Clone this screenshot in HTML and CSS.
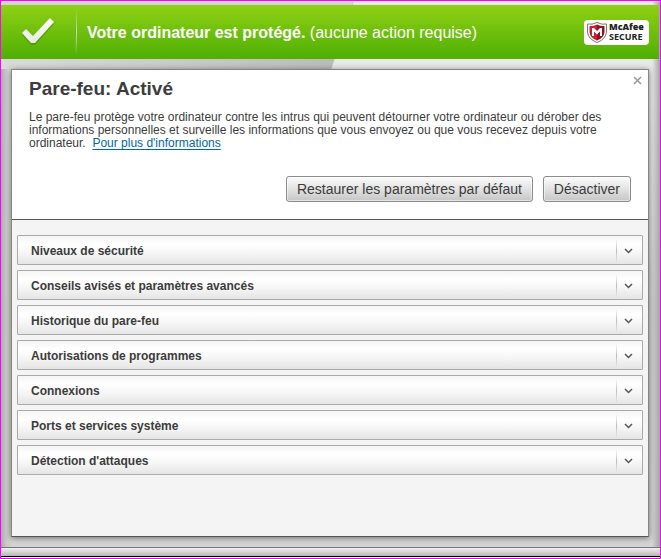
FILE: index.html
```html
<!DOCTYPE html>
<html lang="fr">
<head>
<meta charset="utf-8">
<title>Pare-feu</title>
<link rel="stylesheet" href="styles.css">
</head>
<body>
<div class="window">
  <svg class="facets" aria-hidden="true">
    <defs>
      <linearGradient id="shade" x1="0" y1="0" x2="1" y2="0">
        <stop offset="0" stop-color="#dadada"/><stop offset="1" stop-color="#b9b9b9"/>
      </linearGradient>
    </defs>
    <path d="M0 0H353L330 69H0Z" fill="url(#shade)"/>
    <path d="M0 0H353L351 4H0Z" fill="#d3d3d3"/>
  </svg>
  <header class="status">
    <svg class="check" viewBox="0 0 34 28" aria-hidden="true">
      <defs>
        <linearGradient id="tick" x1="0" y1="0" x2="0" y2="1">
          <stop offset="0" stop-color="#fff"/><stop offset="1" stop-color="#e6ebe2"/>
        </linearGradient>
      </defs>
      <path d="M1 15L5 11L12 18L29 0L33 4L14 25H10Z" fill="#397d08" opacity=".45" transform="translate(0 2)"/>
      <path d="M1 15L5 11L12 18L29 0L33 4L14 25H10Z" fill="url(#tick)"/>
    </svg>
    <span class="rule"></span>
    <p class="message"><strong>Votre ordinateur est protégé.</strong> (aucune action requise)</p>
    <div class="badge">
      <svg class="shield" viewBox="0 0 20 21" aria-hidden="true">
        <path d="M.5 2Q5 3 10 .5Q15 3 19.500 2V10Q19 17 10 20.500Q1 17 .5 10Z" fill="#fff" stroke="#777" stroke-width="1"/>
        <path d="M2.500 4Q6 4.500 10 2.500V18.500Q3 16 2.500 10Z" fill="#d01c30"/>
        <path d="M17.500 4Q14 4.500 10 2.500V18.500Q17 16 17.500 10Z" fill="#96101f"/>
        <path d="M5 6H7L10 9L13 6H15V14H13V9.500L10 12.500L7 9.500V14H5Z" fill="#fff"/>
      </svg>
      <div class="brand"><b>McAfee</b><span>SECURE</span></div>
    </div>
  </header>
  <main class="panel">
    <section class="summary">
      <button class="close" type="button" aria-label="Fermer">
        <svg viewBox="0 0 9 9" aria-hidden="true"><path d="M1 1L8 8M8 1L1 8" stroke="#999" stroke-width="1.500"/></svg>
      </button>
      <h1>Pare-feu: Activé</h1>
      <p class="text">Le pare-feu protège votre ordinateur contre les intrus qui peuvent détourner votre ordinateur ou dérober des<br>informations personnelles et surveille les informations que vous envoyez ou que vous recevez depuis votre<br>ordinateur.&nbsp; <a href="#infos">Pour plus d'informations</a></p>
      <div class="actions">
        <button type="button">Restaurer les paramètres par défaut</button>
        <button type="button">Désactiver</button>
      </div>
    </section>
    <section class="drawers">
      <button class="drawer" type="button"><span>Niveaux de sécurité</span><i><svg viewBox="0 0 9 6"><path d="M1 1L4.500 4.500L8 1"/></svg></i></button>
      <button class="drawer" type="button"><span>Conseils avisés et paramètres avancés</span><i><svg viewBox="0 0 9 6"><path d="M1 1L4.500 4.500L8 1"/></svg></i></button>
      <button class="drawer" type="button"><span>Historique du pare-feu</span><i><svg viewBox="0 0 9 6"><path d="M1 1L4.500 4.500L8 1"/></svg></i></button>
      <button class="drawer" type="button"><span>Autorisations de programmes</span><i><svg viewBox="0 0 9 6"><path d="M1 1L4.500 4.500L8 1"/></svg></i></button>
      <button class="drawer" type="button"><span>Connexions</span><i><svg viewBox="0 0 9 6"><path d="M1 1L4.500 4.500L8 1"/></svg></i></button>
      <button class="drawer" type="button"><span>Ports et services système</span><i><svg viewBox="0 0 9 6"><path d="M1 1L4.500 4.500L8 1"/></svg></i></button>
      <button class="drawer" type="button"><span>Détection d'attaques</span><i><svg viewBox="0 0 9 6"><path d="M1 1L4.500 4.500L8 1"/></svg></i></button>
    </section>
  </main>
  <footer class="bottom"></footer>
</div>
</body>
</html>
```
FILE: styles.css
```css
* { box-sizing: border-box; }
body {
  margin: 0;
  font-family: "Liberation Sans", Arial, sans-serif;
  font-size: 12px;
  color: #3c3c3c;
}
.window {
  position: relative;
  display: flex;
  flex-direction: column;
  min-height: 100vh;
  border: 1px solid #f0f;
  background: linear-gradient(90deg, #aaa, #c8c8c8 5px, transparent 12px, transparent calc(100% - 8px), #a4a4a4), linear-gradient(#e8e8e8 90px, #cfcfcf 300px, #d4d4d4);
}
.facets {
  position: absolute;
  top: 0;
  left: 0;
  width: 100%;
  height: 68px;
}
.status {
  position: relative;
  display: flex;
  align-items: center;
  height: 54px;
  margin: 4px 1px 0 0;
  padding: 0 10px 0 20px;
  background: linear-gradient(#8fd014, #4faf04);
  color: #fff;
}
.check { width: 34px; height: 28px; }
.rule {
  width: 2px;
  height: 46px;
  margin: 0 10px 0 20px;
  background: linear-gradient(transparent, #397d0899 50%, transparent) 0 0 / 1px 100% no-repeat, linear-gradient(transparent, #ffffff99 50%, transparent);
}
.message { flex: 1; margin: 0; padding-top: 2px; font-size: 16px; }
.badge {
  display: flex;
  align-items: center;
  gap: 2px;
  width: 65px;
  height: 25px;
  padding-left: 3px;
  border-radius: 4px;
  background: #fff;
  color: #222;
}
.shield { width: 20px; height: 21px; }
.brand { display: flex; flex-direction: column; font: 9px/10px "Open Sans", sans-serif; }
.brand b { font-weight: 800; }
.brand span { font-weight: 700; }
.panel {
  position: relative;
  flex: 1;
  margin: 10px 11px 10px 10px;
  border: 1px solid #858585;
  border-bottom-color: #555;
  background: #f4f4f4;
  box-shadow: 0 1px 6px #0007;
}
.summary {
  position: relative;
  padding: 9px 17px 17px;
  border-bottom: 1px solid #555;
  background: #fff;
}
.close {
  position: absolute;
  top: 6px;
  right: 6px;
  width: 9px;
  height: 9px;
  padding: 0;
  border: 0;
  background: none;
}
.close svg { display: block; }
h1 { margin: 0 0 12px; font-size: 19px; line-height: 20px; }
.text { margin: 0; line-height: 13px; white-space: nowrap; }
a { color: #0067a5; text-underline-offset: 2px; }
.actions { display: flex; justify-content: flex-end; gap: 10px; margin-top: 26px; }
.actions button {
  height: 26px;
  padding: 0 10px;
  border: 1px solid #8c8c8c;
  border-radius: 3px;
  background: linear-gradient(#fcfcfc, #e2e2e2 50%, #c6c6c6);
  box-shadow: inset 0 0 0 1px #ffffff80;
  color: #3c3c3c;
  font: 14px "Liberation Sans", Arial, sans-serif;
}
.drawers { display: flex; flex-direction: column; gap: 5px; padding: 15px 5px; }
.drawer {
  display: flex;
  align-items: center;
  justify-content: space-between;
  height: 30px;
  padding: 1px 1px 0 13px;
  border: 1px solid #aaa;
  border-radius: 1px;
  background: linear-gradient(#f5f5f5, #fff 30%, #f6f6f6 60%, #e5e5e5);
  color: #3c3c3c;
  font: bold 12px "Liberation Sans", Arial, sans-serif;
}
.drawer i {
  display: flex;
  align-items: center;
  justify-content: center;
  width: 25px;
  height: 24px;
  background: linear-gradient(transparent, #bbb 50%, transparent) 0 0 / 1px 100% no-repeat;
}
.drawer svg { width: 9px; height: 6px; fill: none; stroke: #555; stroke-width: 1.500; }
.bottom {
  height: 11px;
  border-top: 1px solid #777;
  border-bottom: 1px solid #fff;
  background: linear-gradient(#f2f0f0, #b8b4b4 8px, #000 8px);
}
```
